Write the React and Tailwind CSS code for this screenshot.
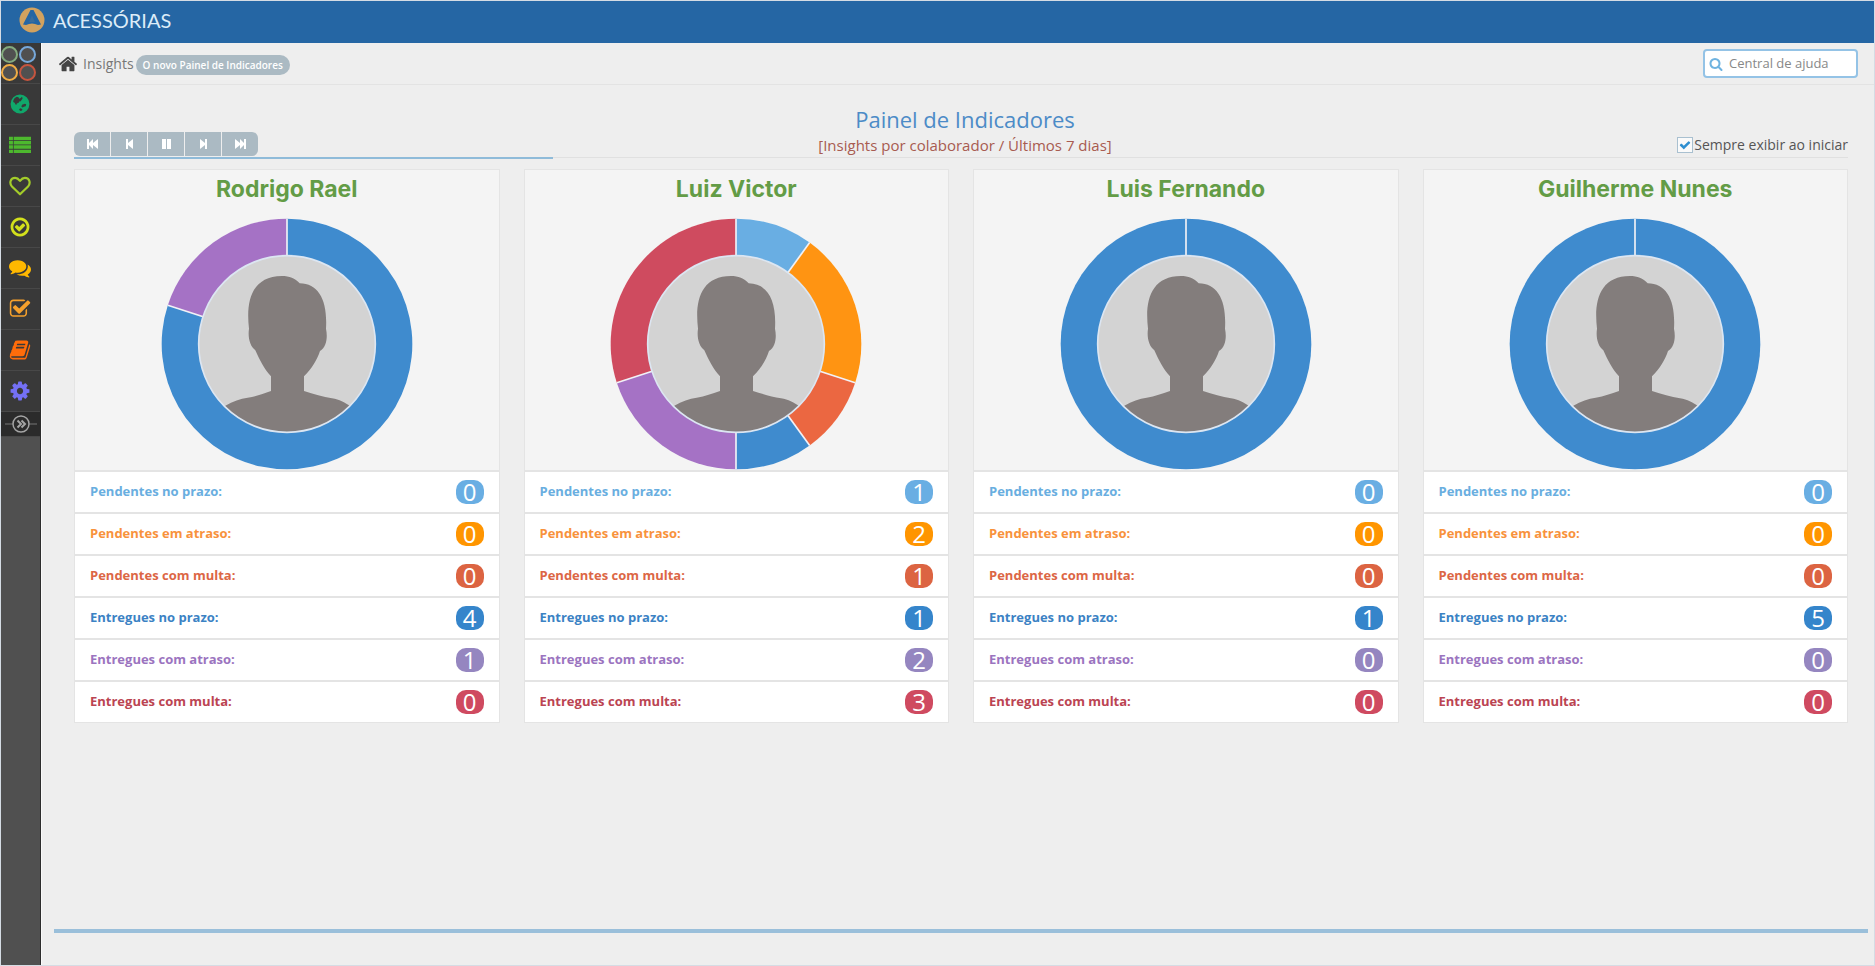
import { useState } from "react";

// Icon outlines on a 1792 grid
const ICONS = {
  home: "M1472 992v480q0 26-19 45t-45 19h-384v-384h-256v384h-384q-26 0-45-19t-19-45v-480q0-1 .5-3t.5-3l575-474 575 474q1 2 1 6zm223-69l-62 74q-8 9-21 11h-3q-13 0-21-7l-692-577-692 577q-12 8-24 7-13-2-21-11l-62-74q-8-10-7-23.5t11-21.5l719-599q32-26 76-26t76 26l244 204v-195q0-14 9-23t23-9h192q14 0 23 9t9 23v408l219 182q10 8 11 21.5t-7 23.5z",
  search:
    "M1216 832q0-185-131.5-316.5t-316.5-131.5-316.5 131.5-131.5 316.5 131.5 316.5 316.5 131.5 316.5-131.5 131.5-316.5zm512 832q0 52-38 90t-90 38q-54 0-90-38l-343-342q-179 124-399 124-143 0-273.5-55.5t-225-150-150-225-55.5-273.5 55.5-273.5 150-225 225-150 273.5-55.5 273.5 55.5 225 150 150 225 55.5 273.5q0 220-124 399l343 343q37 37 37 90z",
  check:
    "M1671 566q0 40-28 68l-724 724-136 136q-28 28-68 28t-68-28l-136-136-362-362q-28-28-28-68t28-68l136-136q28-28 68-28t68 28l294 295 656-657q28-28 68-28t68 28l136 136q28 28 28 68z",
  list: "M0 226h320v280H0zM380 226h1412v280H380zM0 576h320v280H0zM380 576h1412v280H380zM0 926h320v280H0zM380 926h1412v280H380zM0 1276h320v280H0zM380 1276h1412v280H380z",
  globe:
    "M896 128a768 768 0 1 0 0 1536 768 768 0 1 0 0-1536zM470 400l170-90 130 40 60 110 130-60 90-100 60 130-90 130-60 120-130 10-40 110-150 50-50 130-70-60-60-130-120-60 20-170zM1060 960l230-80 110 40-40 150-150 60-90 50-110-60zM900 1250l190 50-30 120-130 40-110-90z",
  checkCircle:
    "M1299 813l-422 422q-19 19-45 19t-45-19l-294-294q-19-19-19-45t19-45l102-102q19-19 45-19t45 19l147 147 275-275q19-19 45-19t45 19l102 102q19 19 19 45t-19 45zm141 83q0-148-73-273t-198-198-273-73-273 73-198 198-73 273 73 273 198 198 273 73 273-73 198-198 73-273zm224 0q0 209-103 385.5t-279.5 279.5-385.5 103-385.5-103-279.5-279.5-103-385.5 103-385.5 279.5-279.5 385.5-103 385.5 103 279.5 279.5 103 385.5z",
  comments:
    "M1408 768q0 139-94 257t-256.5 186.5-353.5 68.5q-86 0-176-16-124 88-278 128-36 9-86 16h-3q-11 0-20.5-8t-11.5-21q-1-3-1-6.5t.5-6.5 2-6l2.5-5 3.5-5.5 4-5 4.5-5 4-4.5q5-6 23-25t26-29.5 22.5-29 25-38.5 20.5-44q-124-72-195-177t-71-224q0-139 94-257t256.5-186.5 353.5-68.5 353.5 68.5 256.5 186.5 94 257zm384 256q0 120-71 224.5t-195 176.5q10 24 20.5 44t25 38.5 22.5 29 26 29.5 23 25q1 1 4 4.5t4.5 5 4 5 3.5 5.5l2.5 5 2 6 .5 6.5-1 6.5q-3 14-13 22t-22 7q-50-7-86-16-154-40-278-128-90 16-176 16-271 0-472-132 58 4 88 4 161 0 309-45t264-129q125-92 192-212t67-254q0-77-23-152 129 71 204 178t75 230z",
  checkSquare:
    "M1472 930v318q0 119-84.5 203.5t-203.5 84.5h-832q-119 0-203.5-84.5t-84.5-203.5v-832q0-119 84.5-203.5t203.5-84.5h832q63 0 117 25 15 7 18 23 3 17-9 29l-49 49q-10 10-23 10-3 0-9-2-23-6-45-6h-832q-66 0-113 47t-47 113v832q0 66 47 113t113 47h832q66 0 113-47t47-113v-254q0-13 9-22l64-64q10-10 23-10 6 0 12 3 20 8 20 29zm231-489l-814 814q-24 24-57 24t-57-24l-430-430q-24-24-24-57t24-57l110-110q24-24 57-24t57 24l263 263 647-647q24-24 57-24t57 24l110 110q24 24 24 57t-24 57z",
  book: "M1703 478q40 57 18 129l-275 906q-19 64-76.5 107.5t-122.5 43.5h-923q-77 0-148.5-53.5t-99.5-131.5q-24-67-2-127 0-4 3-27t4-37q1-8-3-21.5t-3-19.5q2-11 8-21t16.5-23.5 16.5-23.5q23-38 45-91.5t30-91.5q3-10 .5-30t-.5-28q3-11 17-28t17-23q21-36 42-92t25-90q1-9-2.5-32t.5-28q4-13 22-30.5t22-22.5q19-26 42.5-84.5t27.5-96.5q1-8-3-25.5t-2-26.5q2-8 9-18t18-23 17-21q8-12 16.5-30.5t15-35 16-36 19.5-32 26.5-23.5 36-11.5 47.5 5.5l-1 3q38-9 51-9h761q74 0 114 56t18 130l-274 906q-36 119-71.5 153.5t-128.5 34.5h-869q-27 0-38 15-11 16-1 43 24 70 144 70h923q29 0 56-15.5t35-41.5l300-987q7-22 5-57 38 15 59 43zm-1064 2q-4 13 2 22.5t20 9.5h608q13 0 25.5-9.5t16.5-22.5l21-64q4-13-2-22.5t-20-9.5h-608q-13 0-25.5 9.5t-16.5 22.5zm-83 256q-4 13 2 22.5t20 9.5h608q13 0 25.5-9.5t16.5-22.5l21-64q4-13-2-22.5t-20-9.5h-608q-13 0-25.5 9.5t-16.5 22.5z",
  cog: "M1152 896q0-106-75-181t-181-75-181 75-75 181 75 181 181 75 181-75 75-181zm512-109v222q0 12-8 23t-20 13l-185 28q-19 54-39 91 35 50 107 138 10 12 10 25t-9 23q-27 37-99 108t-94 71q-12 0-26-9l-138-108q-44 23-91 38-16 136-29 186-7 28-36 28h-222q-14 0-24.5-8.5t-11.5-21.5l-28-184q-49-16-90-37l-141 107q-10 9-25 9-14 0-25-11-126-114-165-168-7-10-7-23 0-12 8-23 15-21 51-66.5t54-70.5q-27-50-41-99l-183-27q-13-2-21-12.5t-8-23.5v-222q0-12 8-23t19-13l186-28q14-46 39-92-40-57-107-138-10-12-10-24 0-10 9-23 26-36 98.5-107.5t94.5-71.5q13 0 26 10l138 107q44-23 91-38 16-136 29-186 7-28 36-28h222q14 0 24.5 8.5t11.5 21.5l28 184q49 16 90 37l142-107q9-9 24-9 13 0 25 10 129 119 165 170 7 8 7 22 0 12-8 23-15 21-51 66.5t-54 70.5q26 50 41 98l183 28q13 2 21 12.5t8 23.5z",
};

function Icon({ name, className }) {
  return (
    <svg viewBox="0 0 1792 1792" fill="currentColor" fillRule="evenodd" className={className} aria-hidden="true">
      <path d={ICONS[name]} />
    </svg>
  );
}

function HeartIcon({ className }) {
  return (
    <svg viewBox="0 0 24 22" fill="none" stroke="currentColor" strokeWidth="2.4" strokeLinejoin="round" className={className} aria-hidden="true">
      <path d="M12 20 3.2 11.4C.2 8.2 1.200 2 6.700 2 9.300 2 11 4 12 5.300 13 4 14.700 2 17.300 2 22.800 2 23.800 8.200 20.800 11.400Z" />
    </svg>
  );
}

const MENU = [
  { label: "Portal", icon: "globe", color: "text-[#10a86b]", size: "size-[22px]" },
  { label: "Obrigações", icon: "list", color: "text-[#4db82e]", size: "size-[22px]" },
  { label: "Favoritos", icon: "heart", color: "text-[#a3cc2a]", size: "w-[22px]" },
  { label: "Entregas", icon: "checkCircle", color: "text-[#d3e01c]", size: "size-[22px]" },
  { label: "Mensagens", icon: "comments", color: "text-[#ffb800]", size: "size-[22px]" },
  { label: "Tarefas", icon: "checkSquare", color: "text-[#f5a02c]", size: "size-[22px]" },
  { label: "Documentos", icon: "book", color: "text-[#ff6c0a]", size: "size-[22px]" },
  { label: "Configurações", icon: "cog", color: "text-[#7470f5]", size: "size-[22px]" },
];

const CONTROLS = [
  { label: "Primeiro", d: "M0 0h2v4L6 0v4l5-4v10L6 6v4L2 6v4H0z", w: 11 },
  { label: "Anterior", d: "M0 0h2v4L7 0v10L2 6v4H0z", w: 7 },
  { label: "Pausar", d: "M0 0h4v10H0zM5 0h4v10H5z", w: 9 },
  { label: "Próximo", d: "M7 0H5v4L0 0v10l5-4v4h2z", w: 7 },
  { label: "Último", d: "M11 0H9v4L5 0v4L0 0v10l5-4v4l4-4v4h2z", w: 11 },
];

const STATUS = [
  { label: "Pendentes no prazo:", text: "text-[#69aee0]", bg: "bg-[#69aee3]", slice: "#69aee3" },
  { label: "Pendentes em atraso:", text: "text-[#f8923c]", bg: "bg-[#ff9500]", slice: "#ff9412" },
  { label: "Pendentes com multa:", text: "text-[#dc6645]", bg: "bg-[#dc6442]", slice: "#eb6741" },
  { label: "Entregues no prazo:", text: "text-[#3b82c4]", bg: "bg-[#3585cb]", slice: "#3f8bce" },
  { label: "Entregues com atraso:", text: "text-[#9b74bf]", bg: "bg-[#9586c0]", slice: "#a572c5" },
  { label: "Entregues com multa:", text: "text-[#bb4452]", bg: "bg-[#cf4a60]", slice: "#cf4b5f" },
];

const PEOPLE = [
  { name: "Rodrigo Rael", values: [0, 0, 0, 4, 1, 0] },
  { name: "Luiz Victor", values: [1, 2, 1, 1, 2, 3] },
  { name: "Luis Fernando", values: [0, 0, 0, 1, 0, 0] },
  { name: "Guilherme Nunes", values: [0, 0, 0, 5, 0, 0] },
];

const CX = 440;
const CY = 431;
const OUTER = 376;
const INNER = 265;

function point(r, turn) {
  const a = turn * Math.PI * 2;
  return `${CX + r * Math.sin(a)} ${CY - r * Math.cos(a)}`;
}

function Donut({ values, id }) {
  const total = values.reduce((a, b) => a + b, 0);
  let start = 0;
  const slices = values
    .map((v, i) => {
      const from = start;
      start += v / total;
      return { from, to: start, share: v / total, color: STATUS[i].slice };
    })
    .filter((s) => s.share > 0);

  return (
    <svg viewBox="62 53 756 756" className="size-[252px]" role="img" aria-label="Distribuição">
      <circle cx={CX} cy={CY} r={OUTER} fill="#fff" />
      {slices.map((s) =>
        s.share === 1 ? (
          <circle key={s.from} cx={CX} cy={CY} r={OUTER} fill={s.color} />
        ) : (
          <path
            key={s.from}
            fill={s.color}
            d={`M${CX} ${CY}L${point(OUTER, s.from)}A${OUTER} ${OUTER} 0 ${s.share > 0.5 ? 1 : 0} 1 ${point(OUTER, s.to)}Z`}
          />
        )
      )}
      {slices.map((s) => (
        <path key={s.from} d={`M${CX} ${CY}L${point(OUTER, s.from)}`} stroke="#f1f1f6" strokeWidth="5" />
      ))}
      <clipPath id={id}>
        <circle cx={CX} cy={CY} r={INNER} />
      </clipPath>
      <g clipPath={`url(#${id})`}>
        <rect x="150" y="150" width="580" height="580" fill="#d3d3d3" />
        <path
          fill="#837d7c"
          d="M392 572V528C370 505 358 478 345 450C329 438 322 412 326 385C316 300 335 228 425 227C447 227 464 234 478 249C535 250 562 300 557 385C562 408 560 440 539 452C530 480 514 505 491 528V572C520 581 548 590 575 594C598 598 612 606 630 618L700 740H180L255 616C278 602 300 595 322 592C348 588 368 580 392 572Z"
        />
      </g>
      <circle cx={CX} cy={CY} r={INNER} fill="none" stroke="#dce6f2" strokeWidth="5" />
    </svg>
  );
}

function PersonCard({ person, id }) {
  return (
    <section className="border border-[#e4e4e4] bg-white">
      <div className="flex flex-col items-center bg-[#f4f4f4]">
        <h2 className="pt-[3px] pb-[13px] font-['Inter',sans-serif] text-[23px] leading-8 font-bold text-[#639c46]">{person.name}</h2>
        <Donut values={person.values} id={id} />
      </div>
      <ul>
        {STATUS.map((s, i) => (
          <li key={s.label} className="flex h-[42px] items-center justify-between border-t-2 border-[#e4e4e4] px-[15px]">
            <span className={`text-[13px] font-bold ${s.text}`}>{s.label}</span>
            <span className={`flex h-6 w-7 items-center justify-center rounded-[10px] text-2xl leading-6 text-white ${s.bg}`}>
              {person.values[i]}
            </span>
          </li>
        ))}
      </ul>
    </section>
  );
}

function Sidebar() {
  return (
    <nav className="flex w-10 shrink-0 flex-col border-r border-[#2d2d2d] bg-[#505050]" aria-label="Menu">
      <a href="#" aria-label="Aplicativos" className="grid h-10 grid-cols-[17px_17px] content-center gap-px bg-[#393939]">
        <span className="size-[17px] rounded-full border-2 border-[#84ab7e] bg-[#505050]" />
        <span className="size-[17px] rounded-full border-2 border-[#77a8da] bg-[#505050]" />
        <span className="size-[17px] rounded-full border-2 border-[#f0ad45] bg-[#505050]" />
        <span className="size-[17px] rounded-full border-2 border-[#c6553f] bg-[#505050]" />
      </a>
      {MENU.map((m) => (
        <a
          key={m.label}
          href="#"
          aria-label={m.label}
          className={`flex h-[41px] items-center justify-center border-t border-[#484848] bg-[#393939] pr-px ${m.color}`}
        >
          {m.icon === "heart" ? <HeartIcon className={m.size} /> : <Icon name={m.icon} className={m.size} />}
        </a>
      ))}
      <button type="button" aria-label="Expandir menu" className="flex h-[26px] items-center justify-center border-y border-[#484848] bg-[#2b2b2b]">
        <svg viewBox="0 0 36 20" className="h-5 w-9" fill="none" stroke="#a5a5a5">
          <path d="M2 10h8M26 10h8" stroke="#777" />
          <circle cx="18" cy="10" r="8" strokeWidth="1.500" />
          <path d="m14.500 6.500 3.500 3.500-3.500 3.500M18.500 6.500 22 10l-3.500 3.500" strokeWidth="2" />
        </svg>
      </button>
    </nav>
  );
}

export default function App() {
  const [showOnStart, setShowOnStart] = useState(true);

  return (
    <div className="flex min-h-screen flex-col border border-[#d5dce4] bg-[#eeeeee] font-['Open_Sans',sans-serif] text-[#555]">
      <header className="flex h-[42px] items-center gap-2 bg-[#2566a4] pb-1 pl-[18px]">
        <svg viewBox="0 0 26 26" className="size-[26px]" aria-hidden="true">
          <circle cx="13" cy="13" r="12.500" fill="#d2a25f" />
          <path d="M11.500 3h3L22 17.500l-3 .5q-6-3-12 0l-3-.5z" fill="#2566a4" />
          <path d="M13 8.500 10 15h6z" fill="#3a6d9c" />
        </svg>
        <span className="font-['Lato',sans-serif] text-xl leading-6 text-[#dcecf8]">ACESSÓRIAS</span>
      </header>

      <div className="flex flex-1">
        <Sidebar />

        <main className="flex min-w-0 flex-1 flex-col border-l border-[#fafafa]">
          <div className="flex h-[42px] items-center justify-between border-b border-[#e3e3e3] px-4">
            <div className="flex items-center">
              <Icon name="home" className="mr-[5px] size-5 text-[#444]" />
              <a href="#" className="text-[14px] text-[#777]">
                Insights
              </a>
              <span className="mt-[2px] ml-[2px] rounded-full bg-[#abbac3] px-[7px] text-[10px] leading-5 font-semibold text-white">
                O novo Painel de Indicadores
              </span>
            </div>
            <label className="flex h-[29px] w-[155px] items-center gap-[6px] rounded-sm border-2 border-[#94c3e6] bg-white px-1">
              <Icon name="search" className="size-[14px] shrink-0 text-[#6fb3e0]" />
              <input
                type="text"
                aria-label="Central de ajuda"
                placeholder="Central de ajuda"
                className="w-full min-w-0 text-[13px] outline-none placeholder:text-[#888]"
              />
            </label>
          </div>

          <div className="flex-1 pr-[26px] pl-8">
            <div className="grid grid-cols-[1fr_auto_1fr] items-end pt-[18px]">
              <div className="flex pb-px">
                {CONTROLS.map((c) => (
                  <button
                    key={c.label}
                    type="button"
                    aria-label={c.label}
                    className="flex h-6 w-9 items-center justify-center bg-[#abbac3] not-first:ml-px first:rounded-l-md last:rounded-r-md"
                  >
                    <svg viewBox={`0 0 ${c.w} 10`} width={c.w} height="10" fill="#fff">
                      <path d={c.d} />
                    </svg>
                  </button>
                ))}
              </div>
              <div className="pl-2 text-center">
                <h1 className="text-[22px] leading-8 text-[#4c8bc7]">Painel de Indicadores</h1>
                <p className="pb-px text-[15px] leading-[21px] text-[#a85b50]">[Insights por colaborador / Últimos 7 dias]</p>
              </div>
              <label className="flex items-center justify-self-end text-[14px] leading-6">
                <span className="relative mr-px flex size-4">
                  <input
                    type="checkbox"
                    checked={showOnStart}
                    onChange={(e) => setShowOnStart(e.target.checked)}
                    className="size-4 appearance-none border border-[#a9c0d0] bg-[#fafafa]"
                  />
                  {showOnStart && <Icon name="check" className="pointer-events-none absolute inset-0 m-auto size-3 text-[#2f8fd0]" />}
                </span>
                Sempre exibir ao iniciar
              </label>
            </div>
            <div className="h-[2px] border-t border-[#e0e0e0]">
              <div className="-mt-px h-[2px] w-[27%] bg-[#8fbbd9]" />
            </div>

            <div className="mt-[10px] grid grid-cols-4 gap-6">
              {PEOPLE.map((p, i) => (
                <PersonCard key={p.name} person={p} id={`avatar-${i}`} />
              ))}
            </div>
          </div>

          <hr className="mr-[6px] mb-8 ml-3 border-t-4 border-[#9abfda]" />
        </main>
      </div>
    </div>
  );
}
